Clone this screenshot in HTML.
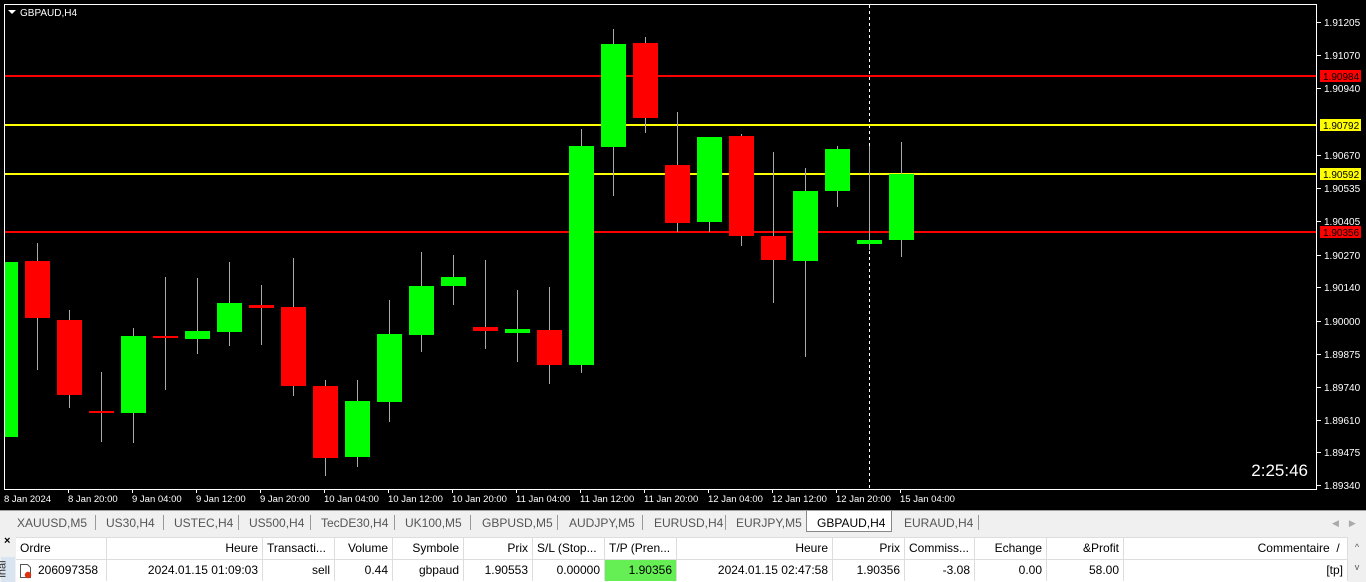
<!DOCTYPE html>
<html><head><meta charset="utf-8"><style>
body{margin:0;width:1366px;height:582px;overflow:hidden;background:#f0f0f0;font-family:"Liberation Sans",sans-serif;}
#chart{position:absolute;left:0;top:0;width:1366px;height:510px;background:#000;}
#tabs{position:absolute;left:0;top:510px;width:1366px;height:22px;background:#f0f0f0;border-top:1px solid #a0a0a0;font-size:12px;color:#555;}
.tab{position:absolute;top:4px;height:16px;line-height:16px;}
.sep{position:absolute;top:4px;width:1px;height:15px;background:#999;}
#tbl{position:absolute;left:16px;top:537px;width:1332px;height:45px;background:#fff;font-size:12px;color:#000;}
.c{position:absolute;height:21px;line-height:21px;box-sizing:border-box;border-right:1px solid #ddd;padding:0 4px;white-space:nowrap;overflow:hidden;}
.r{text-align:right;}
</style></head><body>
<div id="chart">
<svg width="1366" height="510" xmlns="http://www.w3.org/2000/svg" font-family="Liberation Sans, sans-serif">
<rect x="4.5" y="4.5" width="1312" height="485" fill="none" stroke="#fff"/>
<line x1="869.5" y1="5" x2="869.5" y2="489" stroke="#fff" stroke-dasharray="3,3"/>
<g stroke-width="2">
<line x1="5" y1="76" x2="1316" y2="76" stroke="#ff0000"/>
<line x1="5" y1="125" x2="1316" y2="125" stroke="#ffff00"/>
<line x1="5" y1="174" x2="1316" y2="174" stroke="#ffff00"/>
<line x1="5" y1="232" x2="1316" y2="232" stroke="#ff0000"/>
</g>
<g stroke="#aaa" stroke-width="1">
<line x1="37.5" y1="243" x2="37.5" y2="370"/><line x1="69.5" y1="310" x2="69.5" y2="408"/>
<line x1="101.5" y1="372" x2="101.5" y2="442"/><line x1="133.5" y1="328" x2="133.5" y2="443"/>
<line x1="165.5" y1="277" x2="165.5" y2="390"/><line x1="197.5" y1="278" x2="197.5" y2="354"/>
<line x1="229.5" y1="262" x2="229.5" y2="346"/><line x1="261.5" y1="285" x2="261.5" y2="345"/>
<line x1="293.5" y1="258" x2="293.5" y2="396"/><line x1="325.5" y1="380" x2="325.5" y2="476"/>
<line x1="357.5" y1="380" x2="357.5" y2="467"/><line x1="389.5" y1="300" x2="389.5" y2="422"/>
<line x1="421.5" y1="252" x2="421.5" y2="352"/><line x1="453.5" y1="255" x2="453.5" y2="305"/>
<line x1="485.5" y1="260" x2="485.5" y2="349"/><line x1="517.5" y1="290" x2="517.5" y2="362"/>
<line x1="549.5" y1="287" x2="549.5" y2="384"/><line x1="581.5" y1="129" x2="581.5" y2="373"/>
<line x1="613.5" y1="29" x2="613.5" y2="196"/><line x1="645.5" y1="37" x2="645.5" y2="133"/>
<line x1="677.5" y1="112" x2="677.5" y2="232"/><line x1="709.5" y1="137" x2="709.5" y2="232"/>
<line x1="741.5" y1="134" x2="741.5" y2="246"/><line x1="773.5" y1="152" x2="773.5" y2="303"/>
<line x1="805.5" y1="168" x2="805.5" y2="357"/><line x1="837.5" y1="146" x2="837.5" y2="207"/>
<line x1="869.5" y1="146" x2="869.5" y2="250"/><line x1="901.5" y1="142" x2="901.5" y2="257"/>
</g>
<g>
<rect x="5" y="262" width="13" height="175" fill="#00ff00"/>
<rect x="25" y="261" width="25" height="57" fill="#ff0000"/>
<rect x="57" y="320" width="25" height="75" fill="#ff0000"/>
<rect x="89" y="411" width="25" height="2" fill="#ff0000"/>
<rect x="121" y="336" width="25" height="77" fill="#00ff00"/>
<rect x="153" y="336" width="25" height="2" fill="#ff0000"/>
<rect x="185" y="331" width="25" height="8" fill="#00ff00"/>
<rect x="217" y="303" width="25" height="29" fill="#00ff00"/>
<rect x="249" y="305" width="25" height="3" fill="#ff0000"/>
<rect x="281" y="307" width="25" height="79" fill="#ff0000"/>
<rect x="313" y="386" width="25" height="72" fill="#ff0000"/>
<rect x="345" y="401" width="25" height="56" fill="#00ff00"/>
<rect x="377" y="334" width="25" height="68" fill="#00ff00"/>
<rect x="409" y="286" width="25" height="49" fill="#00ff00"/>
<rect x="441" y="277" width="25" height="9" fill="#00ff00"/>
<rect x="473" y="327" width="25" height="4" fill="#ff0000"/>
<rect x="505" y="329" width="25" height="4" fill="#00ff00"/>
<rect x="537" y="330" width="25" height="35" fill="#ff0000"/>
<rect x="569" y="146" width="25" height="219" fill="#00ff00"/>
<rect x="601" y="44" width="25" height="103" fill="#00ff00"/>
<rect x="633" y="43" width="25" height="75" fill="#ff0000"/>
<rect x="665" y="165" width="25" height="58" fill="#ff0000"/>
<rect x="697" y="137" width="25" height="85" fill="#00ff00"/>
<rect x="729" y="136" width="25" height="100" fill="#ff0000"/>
<rect x="761" y="236" width="25" height="24" fill="#ff0000"/>
<rect x="793" y="191" width="25" height="70" fill="#00ff00"/>
<rect x="825" y="149" width="25" height="42" fill="#00ff00"/>
<rect x="857" y="240" width="25" height="4" fill="#00ff00"/>
<rect x="889" y="174" width="25" height="66" fill="#00ff00"/>
</g>
<polygon points="8,10 16,10 12,14" fill="#fff"/>
<text x="20" y="16" fill="#fff" font-size="10">GBPAUD,H4</text>
<text x="1308" y="476" fill="#fff" font-size="17" text-anchor="end">2:25:46</text>
<g fill="#fff" font-size="10">
<g stroke="#fff"><line x1="1317" y1="22.5" x2="1321" y2="22.5"/><line x1="1317" y1="55.5" x2="1321" y2="55.5"/><line x1="1317" y1="88.5" x2="1321" y2="88.5"/><line x1="1317" y1="155.5" x2="1321" y2="155.5"/><line x1="1317" y1="188.5" x2="1321" y2="188.5"/><line x1="1317" y1="221.5" x2="1321" y2="221.5"/><line x1="1317" y1="255.5" x2="1321" y2="255.5"/><line x1="1317" y1="287.5" x2="1321" y2="287.5"/><line x1="1317" y1="321.5" x2="1321" y2="321.5"/><line x1="1317" y1="354.5" x2="1321" y2="354.5"/><line x1="1317" y1="387.5" x2="1321" y2="387.5"/><line x1="1317" y1="420.5" x2="1321" y2="420.5"/><line x1="1317" y1="452.5" x2="1321" y2="452.5"/><line x1="1317" y1="485.5" x2="1321" y2="485.5"/></g>
<text x="1324" y="26">1.91205</text><text x="1324" y="59">1.91070</text><text x="1324" y="92">1.90940</text>
<text x="1324" y="159">1.90670</text><text x="1324" y="192">1.90535</text><text x="1324" y="225">1.90405</text>
<text x="1324" y="259">1.90270</text><text x="1324" y="291">1.90140</text><text x="1324" y="325">1.90000</text>
<text x="1324" y="358">1.89875</text><text x="1324" y="391">1.89740</text><text x="1324" y="424">1.89610</text>
<text x="1324" y="456">1.89475</text><text x="1324" y="489">1.89340</text>
</g>
<rect x="1320" y="70" width="41" height="12" fill="#ff0000"/><text x="1323" y="80" font-size="10" fill="#000">1.90984</text>
<rect x="1320" y="119" width="41" height="12" fill="#ffff00"/><text x="1323" y="129" font-size="10" fill="#000">1.90792</text>
<rect x="1320" y="168" width="41" height="12" fill="#ffff00"/><text x="1323" y="178" font-size="10" fill="#000">1.90592</text>
<rect x="1320" y="226" width="41" height="12" fill="#ff0000"/><text x="1323" y="236" font-size="10" fill="#000">1.90356</text>
<g stroke="#fff"><line x1="68.5" y1="489" x2="68.5" y2="493"/><line x1="132.5" y1="489" x2="132.5" y2="493"/><line x1="196.5" y1="489" x2="196.5" y2="493"/><line x1="260.5" y1="489" x2="260.5" y2="493"/><line x1="324.5" y1="489" x2="324.5" y2="493"/><line x1="388.5" y1="489" x2="388.5" y2="493"/><line x1="452.5" y1="489" x2="452.5" y2="493"/><line x1="516.5" y1="489" x2="516.5" y2="493"/><line x1="580.5" y1="489" x2="580.5" y2="493"/><line x1="644.5" y1="489" x2="644.5" y2="493"/><line x1="708.5" y1="489" x2="708.5" y2="493"/><line x1="772.5" y1="489" x2="772.5" y2="493"/><line x1="836.5" y1="489" x2="836.5" y2="493"/><line x1="900.5" y1="489" x2="900.5" y2="493"/></g>
<g fill="#fff" font-size="9.5">
<text x="4" y="502">8 Jan 2024</text><text x="68" y="502">8 Jan 20:00</text><text x="132" y="502">9 Jan 04:00</text>
<text x="196" y="502">9 Jan 12:00</text><text x="260" y="502">9 Jan 20:00</text><text x="324" y="502">10 Jan 04:00</text>
<text x="388" y="502">10 Jan 12:00</text><text x="452" y="502">10 Jan 20:00</text><text x="516" y="502">11 Jan 04:00</text>
<text x="580" y="502">11 Jan 12:00</text><text x="644" y="502">11 Jan 20:00</text><text x="708" y="502">12 Jan 04:00</text>
<text x="772" y="502">12 Jan 12:00</text><text x="836" y="502">12 Jan 20:00</text><text x="900" y="502">15 Jan 04:00</text>
</g>
</svg>
</div>
<div id="tabs">
<span class="tab" style="left:17px">XAUUSD,M5</span><span class="sep" style="left:95px"></span>
<span class="tab" style="left:106px">US30,H4</span><span class="sep" style="left:163px"></span>
<span class="tab" style="left:174px">USTEC,H4</span><span class="sep" style="left:238px"></span>
<span class="tab" style="left:249px">US500,H4</span><span class="sep" style="left:310px"></span>
<span class="tab" style="left:321px">TecDE30,H4</span><span class="sep" style="left:394px"></span>
<span class="tab" style="left:405px">UK100,M5</span><span class="sep" style="left:470px"></span>
<span class="tab" style="left:482px">GBPUSD,M5</span><span class="sep" style="left:557px"></span>
<span class="tab" style="left:569px">AUDJPY,M5</span><span class="sep" style="left:642px"></span>
<span class="tab" style="left:654px">EURUSD,H4</span><span class="sep" style="left:725px"></span>
<span class="tab" style="left:736px">EURJPY,M5</span>
<div style="position:absolute;left:806px;top:0;width:86px;height:21px;background:#fff;border:1px solid #888;border-top:none;box-sizing:border-box;"></div>
<span class="tab" style="left:817px;color:#000">GBPAUD,H4</span>
<span class="tab" style="left:904px">EURAUD,H4</span><span class="sep" style="left:978px"></span>
<span class="tab" style="left:1332px;font-size:9px;color:#aaa">◀&nbsp;&nbsp;&nbsp;&nbsp;▶</span>
</div>
<div style="position:absolute;left:0;top:533px;width:16px;height:49px;background:#f0f0f0;">
<div style="position:absolute;left:4px;top:2px;font-size:11px;font-weight:bold">×</div>
<div style="position:absolute;left:1px;top:24px;width:14px;height:25px;background:#d8e4f0;"></div>
<div style="position:absolute;left:-6px;top:30px;transform:rotate(-90deg);font-size:11px;color:#333">inal</div>
</div>
<div id="tbl">
<div style="position:absolute;left:0;top:0;width:1332px;height:1px;background:#ddd"></div>
<div class="c" style="left:0;top:1px;width:91px">Ordre</div>
<div class="c r" style="left:91px;top:1px;width:156px">Heure</div>
<div class="c" style="left:247px;top:1px;width:72px">Transacti...</div>
<div class="c r" style="left:319px;top:1px;width:58px">Volume</div>
<div class="c r" style="left:377px;top:1px;width:71px">Symbole</div>
<div class="c r" style="left:448px;top:1px;width:69px">Prix</div>
<div class="c" style="left:517px;top:1px;width:72px">S/L (Stop...</div>
<div class="c" style="left:589px;top:1px;width:72px">T/P (Pren...</div>
<div class="c r" style="left:661px;top:1px;width:156px">Heure</div>
<div class="c r" style="left:817px;top:1px;width:72px">Prix</div>
<div class="c" style="left:889px;top:1px;width:70px">Commiss...</div>
<div class="c r" style="left:959px;top:1px;width:72px">Echange</div>
<div class="c r" style="left:1031px;top:1px;width:77px">&amp;Profit</div>
<div class="c r" style="left:1108px;top:1px;width:224px">Commentaire&nbsp;&nbsp;/&nbsp;</div>
<div style="position:absolute;left:0;top:22px;width:1332px;height:1px;background:#ddd"></div>
<div class="c" style="left:0;top:23px;width:91px;padding-left:22px">206097358</div>
<svg style="position:absolute;left:3px;top:26px" width="14" height="16"><path d="M1.5 1.5h7l3 3v10h-10z" fill="#fff" stroke="#555"/><circle cx="9" cy="12" r="3.2" fill="#e03010"/></svg>
<div class="c r" style="left:91px;top:23px;width:156px">2024.01.15 01:09:03</div>
<div class="c r" style="left:247px;top:23px;width:72px">sell</div>
<div class="c r" style="left:319px;top:23px;width:58px">0.44</div>
<div class="c r" style="left:377px;top:23px;width:71px">gbpaud</div>
<div class="c r" style="left:448px;top:23px;width:69px">1.90553</div>
<div class="c r" style="left:517px;top:23px;width:72px">0.00000</div>
<div class="c r" style="left:589px;top:23px;width:72px;background:#66ee55">1.90356</div>
<div class="c r" style="left:661px;top:23px;width:156px">2024.01.15 02:47:58</div>
<div class="c r" style="left:817px;top:23px;width:72px">1.90356</div>
<div class="c r" style="left:889px;top:23px;width:70px">-3.08</div>
<div class="c r" style="left:959px;top:23px;width:72px">0.00</div>
<div class="c r" style="left:1031px;top:23px;width:77px">58.00</div>
<div class="c r" style="left:1108px;top:23px;width:224px">[tp]</div>
</div>
<div style="position:absolute;left:1348px;top:537px;width:18px;height:45px;background:#f0f0f0;font-size:9px;color:#555;text-align:center;line-height:20px">^<br>v</div>
</body></html>
